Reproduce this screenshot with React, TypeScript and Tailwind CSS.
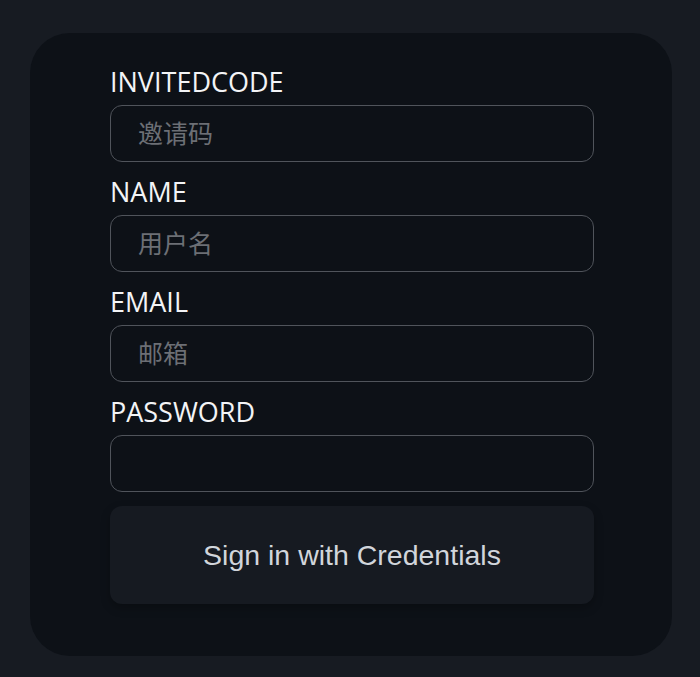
const fields = [
  { label: 'INVITEDCODE', placeholder: '邀请码', type: 'text' },
  { label: 'NAME', placeholder: '用户名', type: 'text' },
  { label: 'EMAIL', placeholder: '邮箱', type: 'email' },
  { label: 'PASSWORD', placeholder: '', type: 'password' },
];

const App = () => {
  return (
    <div className="min-h-[677px] w-full bg-[#171b22] pt-[33px] pl-[30px]">
      <div className="w-[642px] h-[623px] rounded-[40px] bg-[#0d1117] pt-[33px] pl-[80px] pr-[78px] pb-[52px]">
        <form className="flex flex-col" onSubmit={(e) => e.preventDefault()}>
          {fields.map((f) => (
            <div key={f.label} className="flex flex-col mb-[14px]">
              <label className="text-[27px] leading-[32px] text-[#f3f4f6] font-['Open_Sans',sans-serif] mb-[7px]">
                {f.label}
              </label>
              <input
                type={f.type}
                placeholder={f.placeholder}
                className="h-[57px] w-full rounded-[12px] border border-[#50545b] bg-[#0d1117] pl-[27px] pb-[3px] text-[25px] text-[#e5e7eb] placeholder:text-[#6c6f75] outline-none font-['Noto_Sans_CJK_SC',sans-serif]"
              />
            </div>
          ))}
          <button
            type="submit"
            className="h-[98px] w-full rounded-[12px] bg-[#161a21] text-[28.5px] text-[#d1d5db] font-['Liberation_Sans',Arial,sans-serif] shadow-[0_4px_10px_rgba(0,0,0,0.25)]"
          >
            Sign in with Credentials
          </button>
        </form>
      </div>
    </div>
  );
};

export default App;
